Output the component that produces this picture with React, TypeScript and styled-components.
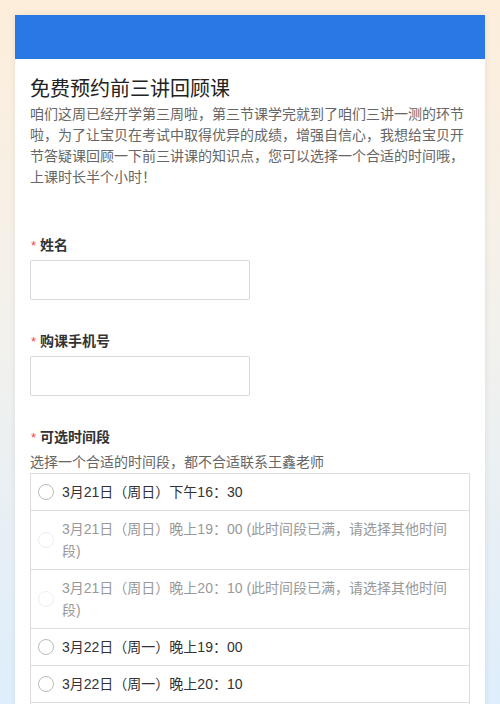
import React from "react";
import styled, { createGlobalStyle } from "styled-components";

const Global = createGlobalStyle`
  html {
    background: linear-gradient(180deg, #fdeedb 0%, #f3f1ec 45%, #deeefc 100%) fixed;
    min-height: 100%;
  }
  body {
    margin: 0;
    font-family: "Liberation Sans", "Noto Sans CJK SC", Arial, sans-serif;
    color: #333;
  }
  * { box-sizing: border-box; }
`;

const Page = styled.div`
  padding: 15px 15px 0;
`;

const Card = styled.div`
  background: #fff;
  box-shadow: 0 0 6px rgba(0, 0, 0, 0.08);
  min-height: 720px;
`;

const Banner = styled.div`
  height: 44px;
  background: #2a78e4;
`;

const Body = styled.div`
  padding: 16px 15px 40px;
`;

const Title = styled.h1`
  margin: 0;
  font-size: 20px;
  font-weight: 400;
  line-height: 28px;
  color: #222;
`;

const Desc = styled.p`
  margin: 1px 0 0;
  font-size: 14px;
  line-height: 21px;
  color: #666;
`;

const Field = styled.div<{ $first?: boolean }>`
  margin-top: ${(p) => (p.$first ? "47px" : "31px")};
`;

const Label = styled.div`
  display: flex;
  align-items: center;
  font-size: 14px;
  line-height: 20px;
  font-weight: 700;
  color: #333;
`;

const Star = styled.span`
  color: #f04848;
  font-weight: 400;
  font-size: 13px;
  margin-left: 1px;
  margin-right: 4px;
  position: relative;
  top: 1px;
`;

const Input = styled.input`
  display: block;
  margin-top: 5px;
  width: 220px;
  height: 40px;
  border: 1px solid #d9d9d9;
  border-radius: 2px;
  outline: none;
  background: #fff;
`;

const Help = styled.div`
  margin-top: 5px;
  font-size: 14px;
  line-height: 20px;
  color: #666;
`;

const Options = styled.div`
  margin-top: 1px;
  border: 1px solid #ddd;
  border-bottom: none;
`;

const Option = styled.label<{ $disabled?: boolean }>`
  display: flex;
  align-items: center;
  gap: 8px;
  padding: 7px 12px 7px 7px;
  border-bottom: 1px solid #ddd;
  font-size: 14px;
  line-height: 22px;
  color: ${(p) => (p.$disabled ? "#999" : "#333")};
  cursor: ${(p) => (p.$disabled ? "default" : "pointer")};
`;

const Radio = styled.span<{ $disabled?: boolean }>`
  flex: none;
  width: 16px;
  height: 16px;
  border-radius: 50%;
  border: 1px solid ${(p) => (p.$disabled ? "#eee" : "#bbb")};
  background: #fff;
`;

const OptText = styled.span`
  flex: 1;
`;

const options = [
  { text: "3月21日（周日）下午16：30" },
  { text: "3月21日（周日）晚上19：00 (此时间段已满，请选择其他时间段)", disabled: true },
  { text: "3月21日（周日）晚上20：10 (此时间段已满，请选择其他时间段)", disabled: true },
  { text: "3月22日（周一）晚上19：00" },
  { text: "3月22日（周一）晚上20：10" },
  { text: "3月23日（周二）晚上19：00" },
];

export default function App() {
  return (
    <>
      <Global />
      <Page>
        <Card>
          <Banner />
          <Body>
            <Title>免费预约前三讲回顾课</Title>
            <Desc>
              咱们这周已经开学第三周啦，第三节课学完就到了咱们三讲一测的环节啦，为了让宝贝在考试中取得优异的成绩，增强自信心，我想给宝贝开节答疑课回顾一下前三讲课的知识点，您可以选择一个合适的时间哦，上课时长半个小时！
            </Desc>
            <Field $first>
              <Label>
                <Star>*</Star>姓名
              </Label>
              <Input type="text" />
            </Field>
            <Field>
              <Label>
                <Star>*</Star>购课手机号
              </Label>
              <Input type="text" />
            </Field>
            <Field>
              <Label>
                <Star>*</Star>可选时间段
              </Label>
              <Help>选择一个合适的时间段，都不合适联系王鑫老师</Help>
              <Options>
                {options.map((o, i) => (
                  <Option key={i} $disabled={o.disabled}>
                    <Radio $disabled={o.disabled} />
                    <OptText>{o.text}</OptText>
                  </Option>
                ))}
              </Options>
            </Field>
          </Body>
        </Card>
      </Page>
    </>
  );
}
